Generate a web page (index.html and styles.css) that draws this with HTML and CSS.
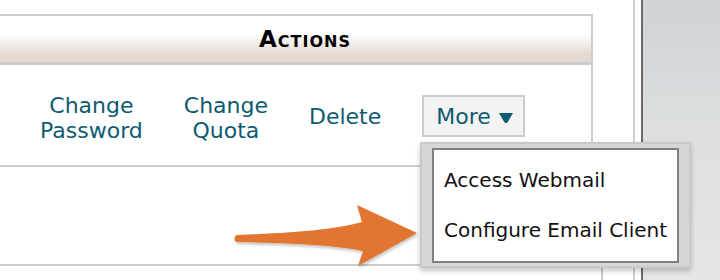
FILE: index.html
```html
<!DOCTYPE html>
<html>
<head>
<meta charset="utf-8">
<link rel="stylesheet" href="styles.css">
</head>
<body>
<div class="page">
  <div class="main">
    <div class="thead">Actions</div>
    <div class="row row-actions">
      <a class="act two">Change<br>Password</a>
      <a class="act two">Change<br>Quota</a>
      <a class="act">Delete</a>
      <span class="more">More<svg class="caret" viewBox="0 0 14 10" width="14" height="10"><path d="M0 0 H14 L8.6 9.3 Q7 10.8 5.4 9.3 Z"/></svg></span>
    </div>
    <div class="row row-empty"></div>
    <div class="row row-next"></div>
  </div>
  <div class="spacer"></div>
  <div class="rule-light"></div>
  <div class="spacer-sm"></div>
  <div class="rule-dark"></div>
  <div class="side"></div>

  <svg class="arrow" viewBox="0 0 720 280" width="720" height="280">
    <defs>
      <filter id="sh" x="-10%" y="-30%" width="120%" height="160%">
        <feDropShadow dx="1" dy="2" stdDeviation="1.5" flood-color="#000" flood-opacity="0.25"/>
      </filter>
    </defs>
    <path filter="url(#sh)" fill="#e37530" d="M238 235 C 290 233 335 230 362 222 L 357 205 L 417 233 L 358 266 L 363 251 C 335 245 290 243 238 242 A 3.5 3.5 0 0 1 238 235 Z"/>
  </svg>

  <div class="menu">
    <ul class="menu-inner">
      <li>Access Webmail</li>
      <li>Configure Email Client</li>
    </ul>
  </div>
</div>
</body>
</html>
```

FILE: styles.css
```css
* { box-sizing: border-box; }
html, body { margin: 0; padding: 0; background: #fff; }
body { font-family: "DejaVu Sans", Verdana, sans-serif; }

.page {
  position: relative;
  display: flex;
  width: 720px;
  height: 280px;
  overflow: hidden;
}

.main {
  width: 593px;
  flex: none;
  padding-top: 14px;
}

.thead {
  height: 51px;
  border-top: 2px solid #cccccc;
  border-right: 2px solid #cccccc;
  border-bottom: 3px solid #cccccc;
  background: linear-gradient(to bottom, #ffffff 0%, #ffffff 38%, #f1ebe7 62%, #e5dbd5 80%, #e3d9d3 100%);
  padding-left: 259px;
  font-size: 23px;
  font-weight: bold;
  font-variant: small-caps;
  letter-spacing: 1px;
  line-height: 46px;
  color: #000;
}

.row {
  border-right: 2px solid #cccccc;
  border-bottom: 2px solid #cccccc;
}

.row-actions {
  height: 102px;
  display: flex;
  align-items: center;
  gap: 41px;
  padding-left: 40px;
  padding-top: 2px;
}

.act {
  color: #0d5b70;
  font-size: 22px;
  line-height: 25px;
  text-align: center;
  text-decoration: none;
}
.act.two { margin-top: 4px; }

.more {
  display: flex;
  align-items: center;
  height: 42px;
  border: 2px solid #cccccc;
  background: #f3f3f3;
  padding: 0 10px 0 12px;
  color: #0d5b70;
  font-size: 22px;
  line-height: 25px;
}
.caret {
  margin-left: 8px;
  margin-top: 3px;
  fill: #0d5b70;
}

.row-empty { height: 99px; }
.row-next {
  width: 603px;
  height: 20px;
  border-bottom: none;
}

.spacer { width: 40px; flex: none; }
.rule-light { width: 2px; flex: none; background: #cfcfcf; }
.spacer-sm { width: 6px; flex: none; }
.rule-dark { width: 2px; flex: none; background: #6a6a6a; }
.side {
  flex: 1;
  background: linear-gradient(to bottom, #cfd3d6 0%, #dcdedf 45%, #e6e6e6 100%);
}

.arrow {
  position: absolute;
  left: 0;
  top: 0;
  pointer-events: none;
}

.menu {
  position: absolute;
  left: 420px;
  top: 142px;
  width: 271px;
  height: 126px;
  border: 2px solid #c9c9c9;
  background: #d6d6d6;
  padding: 4px 10px 3px 10px;
  box-shadow: 0 3px 5px rgba(0, 0, 0, 0.22);
}

.menu-inner {
  list-style: none;
  margin: 0;
  height: 100%;
  border: 2px solid #808080;
  background: #fff;
  padding: 5px 0 6px 0;
}
.menu-inner li {
  padding: 13px 10px;
  font-size: 20px;
  line-height: 24px;
  color: #111;
  white-space: nowrap;
}
```
